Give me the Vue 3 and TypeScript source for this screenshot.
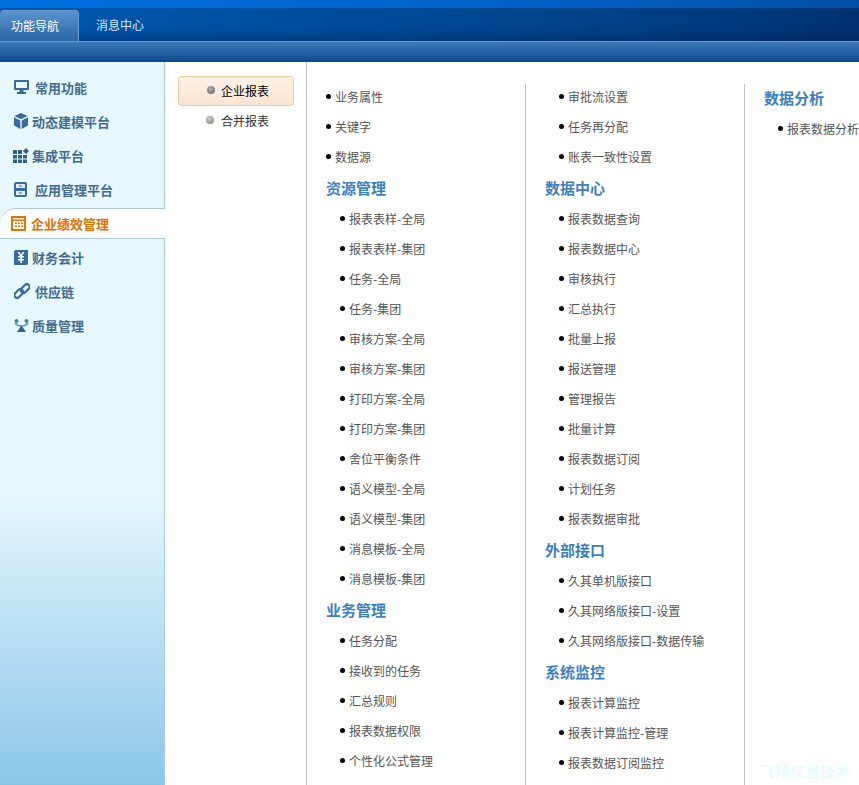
<script setup lang="ts">
interface NavItem { label: string; icon: string; width: number; active?: boolean }
interface Block { title?: string; items: string[]; flat?: boolean }

const nav: NavItem[] = [
  { label: '常用功能', icon: 'monitor', width: 21 },
  { label: '动态建模平台', icon: 'cube', width: 18 },
  { label: '集成平台', icon: 'grid', width: 19 },
  { label: '应用管理平台', icon: 'server', width: 21 },
  { label: '企业绩效管理', icon: 'calc', width: 20, active: true },
  { label: '财务会计', icon: 'yen', width: 18 },
  { label: '供应链', icon: 'link', width: 21 },
  { label: '质量管理', icon: 'cup', width: 18 }
]

const columns: Block[][] = [
  [
    { items: ['业务属性', '关键字', '数据源'], flat: true },
    { title: '资源管理', items: ['报表表样-全局', '报表表样-集团', '任务-全局', '任务-集团', '审核方案-全局', '审核方案-集团', '打印方案-全局', '打印方案-集团', '舍位平衡条件', '语义模型-全局', '语义模型-集团', '消息模板-全局', '消息模板-集团'] },
    { title: '业务管理', items: ['任务分配', '接收到的任务', '汇总规则', '报表数据权限', '个性化公式管理'] }
  ],
  [
    { items: ['审批流设置', '任务再分配', '账表一致性设置'] },
    { title: '数据中心', items: ['报表数据查询', '报表数据中心', '审核执行', '汇总执行', '批量上报', '报送管理', '管理报告', '批量计算', '报表数据订阅', '计划任务', '报表数据审批'] },
    { title: '外部接口', items: ['久其单机版接口', '久其网络版接口-设置', '久其网络版接口-数据传输'] },
    { title: '系统监控', items: ['报表计算监控', '报表计算监控-管理', '报表数据订阅监控'] }
  ],
  [
    { title: '数据分析', items: ['报表数据分析'] }
  ]
]
</script>

<template>
  <div class="page">
    <header class="top">
      <div class="strip"></div>
      <div class="tabs">
        <div class="tab on">功能导航</div>
        <div class="tab">消息中心</div>
      </div>
      <div class="band"></div>
    </header>
    <div class="body">
      <aside class="side">
        <div v-for="n in nav" :key="n.label" class="nav" :class="{ active: n.active }">
          <span class="ico" :class="n.icon" :style="{ width: n.width + 'px' }">
            <svg v-if="n.icon === 'monitor'" width="15" height="14" viewBox="0 0 15 14"><path fill="#3a6a9a" fill-rule="evenodd" d="M1 0h13a1 1 0 0 1 1 1v8a1 1 0 0 1-1 1H9.500v2H12v2H3v-2h2.500v-2H1a1 1 0 0 1-1-1V1a1 1 0 0 1 1-1Zm1 2v6h11V2Z"/></svg>
            <svg v-else-if="n.icon === 'cube'" width="14" height="16" viewBox="0 0 14 16"><path fill="#3a6a9a" d="M7 0l6.500 3L7 6.300.5 3ZM0 4.200l6.300 3.200V16L0 12.500ZM14 4.200L7.700 7.400V16l6.300-3.500Z"/></svg>
            <svg v-else-if="n.icon === 'grid'" width="16" height="15" viewBox="0 0 16 15"><path fill="#2f5f90" d="M0 2h4v4H0zM5 2h4v4H5zM0 7h4v3.500H0zM5 7h4v3.500H5zM10 7h4v3.500h-4zM0 11.500h4V15H0zM5 11.500h4V15H5zM10 11.500h4V15h-4zM13 0l3 3-3 3-3-3z"/></svg>
            <svg v-else-if="n.icon === 'server'" width="13" height="15" viewBox="0 0 13 15"><rect width="13" height="15" rx="2" fill="#3a6a9a"/><path fill="#dcebf5" d="M2 2h9v4H2zM2 9h9v4H2z"/><path fill="#3a6a9a" d="M5 3.500h3v1H5zM5 10.500h3v1H5z"/></svg>
            <svg v-else-if="n.icon === 'calc'" width="15" height="15" viewBox="0 0 15 15"><rect width="15" height="15" fill="#e87200"/><path fill="#fff" d="M2 2h11v1.500H2zM2 5h11v8H2z"/><path fill="#e87200" d="M4 6.500h2V8H4zM7 6.500h2V8H7zM10 6.500h2V8h-2zM4 9.500h2V11H4zM7 9.500h2V11H7zM10 9.500h2V11h-2z"/></svg>
            <svg v-else-if="n.icon === 'yen'" width="14" height="15" viewBox="0 0 14 15"><path fill="#3a6a9a" fill-rule="evenodd" d="M2 0h12v13a2 2 0 0 1-2 2H0V2a2 2 0 0 1 2-2Zm1.500 2L6 6H4v1.500h2.200V9H4v1.500h2.200V13h1.800v-2.500H10V9H8V7.500h2V6H8l2.500-4H8.500L7 4.800 5.500 2Z"/></svg>
            <svg v-else-if="n.icon === 'link'" width="16" height="16" viewBox="0 0 16 16"><g fill="none" stroke="#3a6a9a" stroke-width="2.200"><rect x="8.500" y="0.500" width="5.500" height="10" rx="2.700" transform="rotate(45 11.250 5.500)"/><rect x="2" y="5.500" width="5.500" height="10" rx="2.700" transform="rotate(45 4.750 10.500)"/></g></svg>
            <svg v-else width="15" height="13" viewBox="0 0 15 13"><circle cx="2.500" cy="2" r="2" fill="#4a80b0"/><circle cx="12.500" cy="2" r="2" fill="#4a80b0"/><path fill="none" stroke="#5a90c0" stroke-width="1.500" d="M1 4c2 2.500 4 3 6.500 3S12 6.500 14 4"/><path fill="#2f6294" d="M7.500 6.500L12 13H3Z"/></svg>
          </span>
          <span>{{ n.label }}</span>
        </div>
      </aside>
      <nav class="sub">
        <div class="subitem on"><i class="dot"></i>企业报表</div>
        <div class="subitem"><i class="dot"></i>合并报表</div>
      </nav>
      <main class="main">
        <section v-for="(col, i) in columns" :key="i" class="col">
          <template v-for="(b, j) in col" :key="j">
            <h3 v-if="b.title">{{ b.title }}</h3>
            <div v-for="it in b.items" :key="it" class="item" :class="{ flat: b.flat }"><i class="bul"></i>{{ it }}</div>
          </template>
        </section>
      </main>
    </div>
    <div class="mark">飞翔信息技术</div>
  </div>
</template>

<style scoped>
.page {
  position: relative;
  display: flex;
  flex-direction: column;
  width: 859px;
  height: 785px;
  overflow: hidden;
  font-family: "Noto Sans CJK SC", "Liberation Sans", sans-serif;
  font-size: 12px;
  background: #fff;
}
.strip {
  height: 8px;
  background: linear-gradient(90deg, #006fe0 0%, #0062c8 60%, #004fa6 100%);
}
.tabs {
  display: flex;
  height: 33px;
  box-sizing: border-box;
  padding-top: 2px;
  background: linear-gradient(100deg, #0059b2 0%, #00468f 60%, #003272 100%);
  box-shadow: inset 0 -12px 12px -8px rgba(0, 30, 80, 0.5);
}
.tab {
  width: 78px;
  text-align: center;
  line-height: 29px;
  color: #d6e8f8;
}
.tab.on {
  width: 79px;
  box-sizing: border-box;
  border: 1px solid #6b9ccb;
  border-left: 0;
  border-bottom: 0;
  border-radius: 4px 4px 0 0;
  margin-right: -1px;
  padding-right: 10px;
  padding-left: 2px;
  background: linear-gradient(180deg, #5a94ce, #2a65a5);
  color: #fff;
}
.tab + .tab { margin-left: 18px; width: 48px; white-space: nowrap; }
.band {
  height: 21px;
  border-top: 1px solid #6a97c4;
  box-sizing: border-box;
  background: linear-gradient(180deg, #3d7ab9, #0c4a8e);
}
.body {
  flex: 1;
  display: flex;
  min-height: 0;
}
.side {
  width: 165px;
  flex: none;
  box-sizing: border-box;
  padding-top: 8px;
  border-right: 1px solid #a9c9e2;
  background: linear-gradient(180deg, #e8f7fd 0%, #e8f7fd 59%, #8ac6e8 100%);
}
.nav {
  display: flex;
  align-items: center;
  height: 34px;
  box-sizing: border-box;
  padding-left: 14px;
  font-size: 13px;
  font-weight: 700;
  color: #436b90;
  white-space: nowrap;
}
.nav.active {
  height: 31px;
  margin: 2px -1px 1px 0;
  padding-left: 11px;
  color: #e07000;
  background: #fff;
  border-top: 1px solid #a8c8e4;
  border-bottom: 1px solid #a8c8e4;
  border-top-left-radius: 16px;
}
.ico {
  display: inline-flex;
  align-items: center;
  flex: none;
}
.ico.grid { margin-left: -1px; }
.sub {
  width: 142px;
  flex: none;
  box-sizing: border-box;
  padding: 14px 12px 0 13px;
  border-right: 1px solid #c3c3c3;
}
.subitem {
  display: flex;
  align-items: center;
  height: 30px;
  box-sizing: border-box;
  padding: 0 0 2px 28px;
  color: #333;
}
.subitem.on {
  color: #000;
  border: 1px solid #f5c79e;
  border-radius: 4px;
  background: linear-gradient(180deg, #fff2e6, #fbe3d2);
}
.dot {
  width: 8px;
  height: 8px;
  border-radius: 50%;
  margin-right: 7px;
  background: radial-gradient(circle at 40% 35%, #cfcfcf, #777);
}
.on .dot {
  margin-right: 6px;
  background: radial-gradient(circle at 40% 35%, #b0b0b0, #666);
}
.main {
  flex: 1;
  display: flex;
  min-width: 0;
  padding-top: 22px;
}
.col {
  width: 219px;
  flex: none;
  box-sizing: border-box;
  border-left: 1px solid #c3c3c3;
  white-space: nowrap;
}
.col:first-child { border-left: 0; width: 218px; }
h3 {
  margin: 0;
  padding-left: 19px;
  height: 32px;
  line-height: 28px;
  font-size: 15px;
  font-weight: 700;
  color: #3d7fc0;
}
.item {
  display: flex;
  align-items: center;
  height: 30px;
  box-sizing: border-box;
  padding: 0 0 6px 33px;
  color: #555;
}
.item.flat { padding-left: 19px; }
.bul {
  width: 5px;
  height: 5px;
  border-radius: 50%;
  background: #000;
  margin-right: 4px;
  flex: none;
}
.mark {
  position: absolute;
  right: 9px;
  bottom: 4px;
  font-size: 15px;
  line-height: 20px;
  color: #e2fbfb;
}
</style>

<style>
html, body { margin: 0; overflow: hidden; }
</style>
